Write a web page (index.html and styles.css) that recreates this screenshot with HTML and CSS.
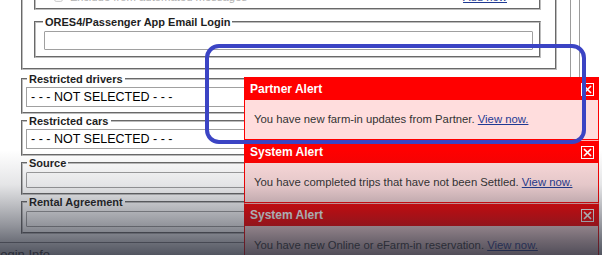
FILE: index.html
```html
<!DOCTYPE html>
<html lang="en">
<head>
    <meta charset="UTF-8">
    <meta name="viewport" content="width=device-width, initial-scale=1.0">
    <title>Reservation - Notifications</title>
    <link rel="stylesheet" href="styles.css">
</head>
<body>
    <div class="page">
        <div class="main">
            <div class="form">
                <fieldset class="outer">
                    <fieldset class="exclude">
                        <div class="exclude-row">
                            <input type="checkbox" class="check" disabled>
                            <span class="muted">Exclude from automated messages</span>
                            <a href="#" class="add-link">Add new</a>
                        </div>
                    </fieldset>
                    <fieldset class="ores">
                        <legend>ORES4/Passenger App Email Login</legend>
                        <input type="text" class="text-input ores-input">
                    </fieldset>
                </fieldset>

                <fieldset class="field">
                    <legend>Restricted drivers</legend>
                    <select class="picker"><option>- - - NOT SELECTED - - -</option></select>
                </fieldset>
                <fieldset class="field">
                    <legend>Restricted cars</legend>
                    <select class="picker"><option>- - - NOT SELECTED - - -</option></select>
                </fieldset>
                <fieldset class="field">
                    <legend>Source</legend>
                    <input type="text" class="text-input field-input">
                </fieldset>
                <fieldset class="field">
                    <legend>Rental Agreement</legend>
                    <input type="text" class="text-input field-input">
                </fieldset>
            </div>
            <div class="section-title">Login Info</div>
        </div>
        <div class="rail"></div>
    </div>

    <!-- notification stack -->
    <div class="alerts">
        <div class="alert">
            <div class="alert-head">
                <span>Partner Alert</span>
                <span class="close"><svg width="13" height="13" viewBox="0 0 13 13"><rect x="0.5" y="0.5" width="12" height="12" fill="none" stroke="#fff"/><path d="M3 3 L10 10 M10 3 L3 10" stroke="#fff" stroke-width="1.7"/></svg></span>
            </div>
            <div class="alert-body">You have new farm-in updates from Partner. <a href="#">View now.</a></div>
        </div>
        <div class="alert">
            <div class="alert-head">
                <span>System Alert</span>
                <span class="close"><svg width="13" height="13" viewBox="0 0 13 13"><rect x="0.5" y="0.5" width="12" height="12" fill="none" stroke="#fff"/><path d="M3 3 L10 10 M10 3 L3 10" stroke="#fff" stroke-width="1.7"/></svg></span>
            </div>
            <div class="alert-body">You have completed trips that have not been Settled. <a href="#">View now.</a></div>
        </div>
        <div class="alert">
            <div class="alert-head">
                <span>System Alert</span>
                <span class="close"><svg width="13" height="13" viewBox="0 0 13 13"><rect x="0.5" y="0.5" width="12" height="12" fill="none" stroke="#fff"/><path d="M3 3 L10 10 M10 3 L3 10" stroke="#fff" stroke-width="1.7"/></svg></span>
            </div>
            <div class="alert-body">You have new Online or eFarm-in reservation. <a href="#">View now.</a></div>
        </div>
    </div>

    <div class="highlight"></div>
    <div class="fade"></div>
</body>
</html>
```

FILE: styles.css
```css
body {
    margin: 0;
    width: 602px;
    height: 255px;
    overflow: hidden;
    position: relative;
    background-color: #fff;
    font-family: 'Liberation Sans', Arial, sans-serif;
    color: #222;
}

.page {
    display: flex;
    height: 255px;
}

.main {
    width: 571px;
    box-sizing: border-box;
    border-right: 1px solid #9c9c9c;
    flex-shrink: 0;
}

.rail {
    width: 9px;
    box-sizing: border-box;
    border-right: 1px solid #9c9c9c;
    flex-shrink: 0;
}

.form {
    padding-left: 21px;
}

fieldset {
    margin: 0;
    min-inline-size: 0;
    border: 2px groove #bdbdbd;
    box-sizing: border-box;
}

legend {
    font-size: 11px;
    font-weight: bold;
    line-height: 14px;
    padding: 0 2px;
    margin-left: 1px;
    color: #1e1e1e;
}

.outer {
    width: 536px;
    margin-top: -22px;
    padding: 6px 14px 10px 11px;
}

.exclude {
    padding: 1px 14px 3px 14px;
}

.exclude-row {
    display: flex;
    align-items: center;
    height: 16px;
    font-size: 11.3px;
}

.check {
    width: 9px;
    height: 9px;
    margin: 0 7px 0 4px;
}

.muted {
    color: #b0b0b0;
}

.add-link {
    margin-left: auto;
    margin-right: 18px;
    color: #1f3a93;
}

.ores {
    margin-top: 5px;
    padding: 0 6px 6px 8px;
}

.ores legend {
    margin-left: -1px;
}

.text-input {
    display: block;
    width: 100%;
    box-sizing: border-box;
    border: 1px solid #a0a0a0;
    border-radius: 1px;
    background: #fff;
    margin: 0;
    padding: 0 4px;
}

.ores-input {
    height: 19px;
    margin-top: 2px;
}

.field {
    width: 536px;
    padding: 0 4px 5px 3px;
}

.outer + .field {
    margin-top: 2px;
}

.picker {
    display: block;
    width: 100%;
    height: 20px;
    margin: 1px 0 0;
    padding: 0 4px;
    appearance: none;
    border: 1px solid #a0a0a0;
    border-radius: 0;
    background: #fff;
    font-family: 'Liberation Sans', Arial, sans-serif;
    font-size: 12.5px;
    color: #000;
}

.field-input {
    height: 16px;
    margin-top: 2px;
}

.section-title {
    margin-top: 8px;
    border-top: 1px solid #8a8a8a;
    padding-top: 4px;
    text-indent: -7px;
    font-size: 13px;
    color: #333;
}

/* notification stack */
.alerts {
    position: absolute;
    left: 244px;
    top: 77px;
    width: 355px;
    z-index: 2;
}

.alert {
    border: 1px solid #ff0000;
    height: 63px;
    box-sizing: border-box;
}

.alert + .alert {
    border-top-color: #ffb4b4;
}

.alert-head {
    display: flex;
    align-items: center;
    justify-content: space-between;
    height: 22px;
    padding: 0 4px 0 5px;
    background-color: #ff0000;
    color: #fff;
    font-size: 12px;
    font-weight: bold;
}

.close {
    display: flex;
    width: 13px;
    height: 13px;
}

.alert-body {
    height: 39px;
    line-height: 39px;
    padding-left: 9px;
    background-color: #ffdddd;
    color: #333;
    font-size: 11.3px;
    white-space: nowrap;
}

.alert-body a {
    color: #1f3a93;
}

.highlight {
    position: absolute;
    left: 205px;
    top: 44px;
    width: 381px;
    height: 100px;
    box-sizing: border-box;
    border: 4px solid #3b44c4;
    border-radius: 14px;
    z-index: 3;
}

.fade {
    position: absolute;
    left: 0;
    right: 0;
    top: 150px;
    bottom: 0;
    z-index: 4;
    pointer-events: none;
    background: linear-gradient(to bottom,
        rgba(38, 42, 56, 0) 0%,
        rgba(38, 42, 56, 0.12) 33%,
        rgba(38, 42, 56, 0.3) 52%,
        rgba(38, 42, 56, 0.5) 72%,
        rgba(38, 42, 56, 0.66) 86%,
        rgba(38, 42, 56, 0.8) 100%);
}
```
